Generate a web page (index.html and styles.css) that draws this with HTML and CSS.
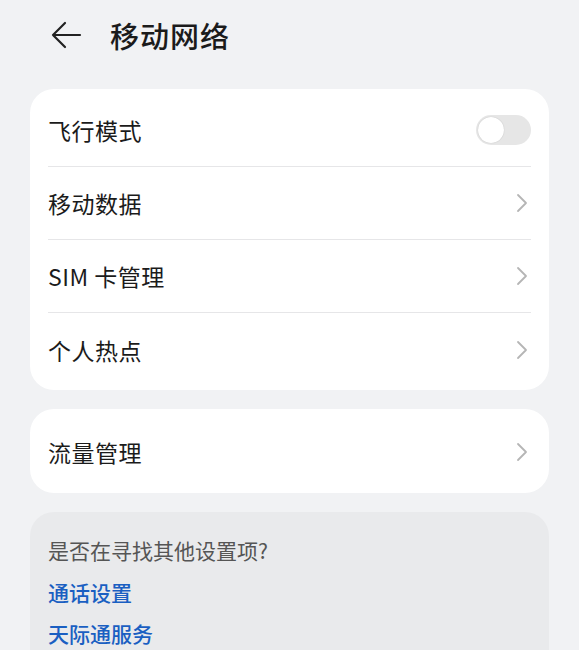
FILE: index.html
```html
<!DOCTYPE html>
<html>
<head>
    <meta charset="utf-8">
    <title>移动网络</title>
    <link rel="stylesheet" href="styles.css">
</head>
<body>
    <div class="header">
        <svg class="back" width="32" height="28" viewBox="0 0 32 28">
            <path d="M30 14H3M15 2L3 14L15 26" fill="none" stroke="#222" stroke-width="2.2" stroke-linecap="round" stroke-linejoin="round"/>
        </svg>
        <div class="title">移动网络</div>
    </div>

    <div class="card">
        <div class="row">
            <span class="label">飞行模式</span>
            <div class="switch"><div class="knob"></div></div>
        </div>
        <div class="row">
            <span class="label">移动数据</span>
            <svg class="chevron" width="12" height="20" viewBox="0 0 12 20"><path d="M2 2L10 10L2 18" fill="none" stroke="#b5b5b5" stroke-width="1.8" stroke-linecap="round" stroke-linejoin="round"/></svg>
        </div>
        <div class="row">
            <span class="label">SIM 卡管理</span>
            <svg class="chevron" width="12" height="20" viewBox="0 0 12 20"><path d="M2 2L10 10L2 18" fill="none" stroke="#b5b5b5" stroke-width="1.8" stroke-linecap="round" stroke-linejoin="round"/></svg>
        </div>
        <div class="row">
            <span class="label">个人热点</span>
            <svg class="chevron" width="12" height="20" viewBox="0 0 12 20"><path d="M2 2L10 10L2 18" fill="none" stroke="#b5b5b5" stroke-width="1.8" stroke-linecap="round" stroke-linejoin="round"/></svg>
        </div>
    </div>

    <div class="card single">
        <div class="row">
            <span class="label">流量管理</span>
            <svg class="chevron" width="12" height="20" viewBox="0 0 12 20"><path d="M2 2L10 10L2 18" fill="none" stroke="#b5b5b5" stroke-width="1.8" stroke-linecap="round" stroke-linejoin="round"/></svg>
        </div>
    </div>

    <div class="suggest">
        <div class="question">是否在寻找其他设置项?</div>
        <a class="link">通话设置</a>
        <a class="link">天际通服务</a>
    </div>
</body>
</html>
```

FILE: styles.css
```css
body {
    margin: 0;
    background: #f1f2f4;
    font-family: "Noto Sans CJK SC", "Noto Sans", sans-serif;
    color: #1b1b1b;
}

.header {
    display: flex;
    align-items: center;
    height: 72px;
    box-sizing: border-box;
    padding: 0 0 3px 50px;
}

.header .back {
    margin-right: 28px;
}

.header .title {
    font-size: 29px;
    font-weight: 500;
    letter-spacing: 1px;
}

.card {
    background: #ffffff;
    margin: 17px 30px 0 30px;
    border-radius: 24px;
    padding: 5px 18px 4px 18px;
}

.card .row {
    display: flex;
    align-items: center;
    justify-content: space-between;
    height: 73px;
    box-sizing: border-box;
    border-bottom: 1px solid #e6e6e8;
}

.card .row:last-child {
    border-bottom: none;
}

.card.single {
    margin-top: 19px;
    padding: 6px 18px 5px 18px;
}

.label {
    font-size: 23px;
    letter-spacing: 0.5px;
}

.chevron {
    margin-right: 3px;
}

.switch {
    width: 55px;
    height: 30px;
    border-radius: 15px;
    background: #e6e6e6;
    display: flex;
    align-items: center;
    padding-left: 2px;
    box-sizing: border-box;
}

.switch .knob {
    width: 26px;
    height: 26px;
    border-radius: 50%;
    background: #ffffff;
    box-shadow: 0 0 1px rgba(0, 0, 0, 0.25);
}

.suggest {
    background: #e9eaec;
    margin: 19px 30px 0 30px;
    border-radius: 24px;
    padding: 23px 18px 20px 18px;
    display: flex;
    flex-direction: column;
    height: 180px;
}

.suggest .question {
    font-size: 21px;
    line-height: 30px;
    color: #555;
    height: 42px;
}

.suggest .link {
    font-size: 21px;
    font-weight: 500;
    color: #1a5fc2;
    line-height: 30px;
    margin-bottom: 11px;
}
```
